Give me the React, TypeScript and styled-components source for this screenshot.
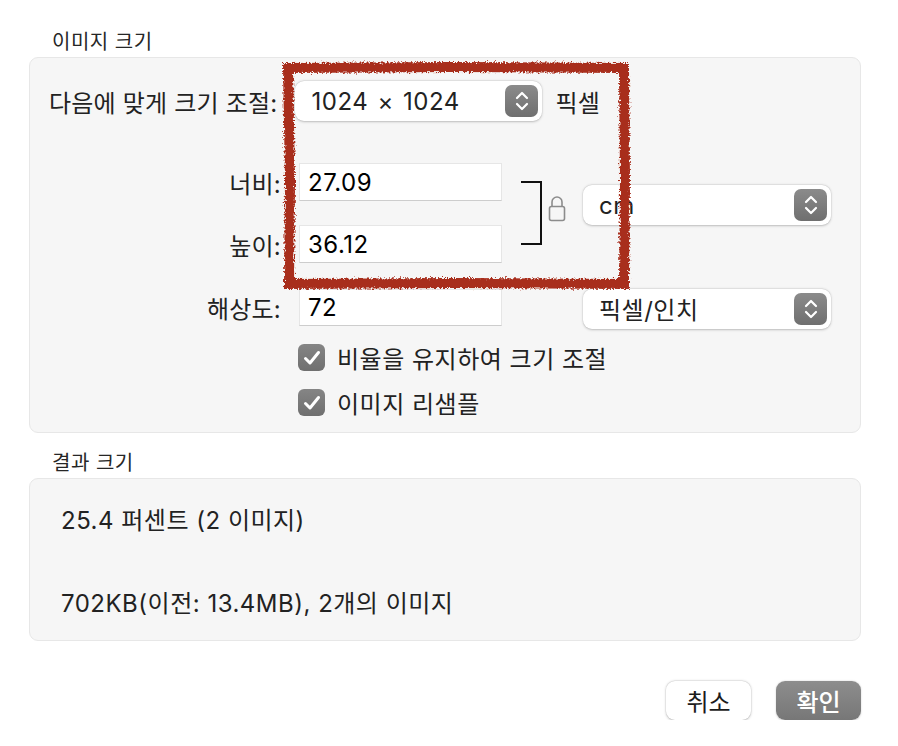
import styled, { createGlobalStyle } from "styled-components";

const GlobalStyle = createGlobalStyle`
  body {
    margin: 0;
    background: #ffffff;
    font-family: Inter, "Noto Sans CJK KR", sans-serif;
    color: #222222;
    letter-spacing: 0.5px;
  }
`;

function Stepper() {
  return (
    <StepperButton>
      <svg width="14" height="22" viewBox="0 0 14 22" fill="none">
        <path d="M2 8 L7 3 L12 8" stroke="#fff" strokeWidth="2.2" strokeLinecap="round" strokeLinejoin="round" />
        <path d="M2 14 L7 19 L12 14" stroke="#fff" strokeWidth="2.2" strokeLinecap="round" strokeLinejoin="round" />
      </svg>
    </StepperButton>
  );
}

function Popup({ value }: { value: string }) {
  return (
    <PopupBox>
      <span>{value}</span>
      <Stepper />
    </PopupBox>
  );
}

function Check({ label }: { label: string }) {
  return (
    <CheckRow>
      <CheckBox>
        <svg width="18" height="16" viewBox="0 0 18 16" fill="none">
          <path d="M2.5 8.5 L7 13 L15.5 2.5" stroke="#fff" strokeWidth="3" strokeLinecap="round" strokeLinejoin="round" />
        </svg>
      </CheckBox>
      <span>{label}</span>
    </CheckRow>
  );
}

function LockIcon() {
  return (
    <LockWrap>
      <svg width="18" height="27" viewBox="0 0 18 27" fill="none">
        <path d="M4 12 V7 a5 5 0 0 1 10 0 V12" stroke="#8c8c8c" strokeWidth="1.6" />
        <rect x="1.5" y="11.5" width="15" height="14" rx="2" stroke="#8c8c8c" strokeWidth="1.6" />
      </svg>
    </LockWrap>
  );
}

function Annotation() {
  return (
    <Overlay width="898" height="746" viewBox="0 0 898 746">
      <defs>
        <filter id="rough" x="-5%" y="-5%" width="110%" height="110%">
          <feTurbulence type="fractalNoise" baseFrequency="0.55" numOctaves="2" seed="3" />
          <feDisplacementMap in="SourceGraphic" scale="6" />
        </filter>
      </defs>
      <path
        d="M288 68 L450 67 L624 68 L625 180 L624 284 L450 283 L289 284 L290 180 Z"
        stroke="#a82d1c"
        strokeWidth="10"
        fill="none"
        strokeLinejoin="miter"
        filter="url(#rough)"
      />
    </Overlay>
  );
}

export default function App() {
  return (
    <>
      <GlobalStyle />
      <Page>
        <SectionTitle>이미지 크기</SectionTitle>
        <Panel $pad="23px 30px 16px 19px">
          <FitRow>
            <Label>다음에 맞게 크기 조절:</Label>
            <PopupSlot $width={247}>
              <Popup value="1024 × 1024" />
            </PopupSlot>
            <Label>픽셀</Label>
          </FitRow>
          <DimGrid>
            <GridLabel $row={1}>너비:</GridLabel>
            <Field $row={1}>27.09</Field>
            <GridLabel $row={3}>높이:</GridLabel>
            <Field $row={3}>36.12</Field>
            <LinkCell>
              <Bracket />
              <LockIcon />
            </LinkCell>
            <PopupCell $row="1 / 4" $shift={-8}>
              <Popup value="cm" />
            </PopupCell>
            <GridLabel $row={5}>해상도:</GridLabel>
            <Field $row={5}>72</Field>
            <PopupCell $row="5" $shift={1}>
              <Popup value="픽셀/인치" />
            </PopupCell>
          </DimGrid>
          <CheckList>
            <Check label="비율을 유지하여 크기 조절" />
            <Check label="이미지 리샘플" />
          </CheckList>
        </Panel>
        <SectionTitle $top={18}>결과 크기</SectionTitle>
        <Panel $pad="27px 30px 21px 31px">
          <ResultLine>25.4 퍼센트 (2 이미지)</ResultLine>
          <ResultLine $top={53}>702KB(이전: 13.4MB), 2개의 이미지</ResultLine>
        </Panel>
        <Actions>
          <Button>취소</Button>
          <Button $primary>확인</Button>
        </Actions>
        <Annotation />
      </Page>
    </>
  );
}

const Page = styled.div`
  position: relative;
  width: 832px;
  padding: 30px 0 0 29px;
  display: flex;
  flex-direction: column;
`;

const SectionTitle = styled.div<{ $top?: number }>`
  margin: ${({ $top }) => $top || 0}px 0 3px 23px;
  height: 24px;
  line-height: 24px;
  font-size: 20px;
  color: #262626;
`;

const Panel = styled.div<{ $pad: string }>`
  box-sizing: border-box;
  background: #f6f6f6;
  border: 1px solid #e7e7e7;
  border-radius: 9px;
  padding: ${({ $pad }) => $pad};
`;

const FitRow = styled.div`
  display: flex;
  align-items: center;
  height: 40px;

  & > :first-child {
    margin-right: 18px;
  }
  & > :last-child {
    margin-left: 13px;
  }
`;

const Label = styled.span`
  font-size: 24px;
  letter-spacing: 0.2px;
  color: #222;
  white-space: nowrap;
`;

const PopupSlot = styled.div<{ $width: number }>`
  width: ${({ $width }) => $width}px;
`;

const PopupBox = styled.div`
  box-sizing: border-box;
  height: 40px;
  display: flex;
  align-items: center;
  justify-content: space-between;
  padding: 0 4px 0 16px;
  background: #ffffff;
  border-radius: 9px;
  box-shadow: 0 0.5px 2.5px rgba(0, 0, 0, 0.22), 0 0 0 0.5px rgba(0, 0, 0, 0.06);
  font-size: 24px;
  word-spacing: 2px;
  color: #222;
`;

const StepperButton = styled.div`
  width: 33px;
  height: 32px;
  border-radius: 7px;
  background: linear-gradient(#8b8b8b, #6f6f6f);
  display: flex;
  align-items: center;
  justify-content: center;
`;

const DimGrid = styled.div`
  display: grid;
  grid-template-columns: 250px 203px 81px 248px;
  grid-template-rows: 38px 24px 38px 26px 37px;
  margin-top: 42px;
`;

const GridLabel = styled.span<{ $row: number }>`
  grid-column: 1;
  grid-row: ${({ $row }) => $row};
  align-self: center;
  justify-self: end;
  padding-right: 18px;
  font-size: 24px;
  letter-spacing: 0.2px;
  color: #222;
`;

const Field = styled.div<{ $row: number }>`
  grid-column: 2;
  grid-row: ${({ $row }) => $row};
  box-sizing: border-box;
  display: flex;
  align-items: center;
  padding-left: 8px;
  background: #ffffff;
  border: 1px solid #e6e6e6;
  border-bottom-color: #cdcdcd;
  font-size: 24px;
  color: #000;
`;

const LinkCell = styled.div`
  grid-column: 3;
  grid-row: 1 / 4;
  display: flex;
  align-items: center;
  padding-left: 19px;
  gap: 6px;
`;

const Bracket = styled.div`
  width: 19px;
  height: 60px;
  border: 2px solid #111;
  border-left: none;
`;

const LockWrap = styled.span`
  display: flex;
  margin-bottom: 10px;
`;

const PopupCell = styled.div<{ $row: string; $shift: number }>`
  grid-column: 4;
  grid-row: ${({ $row }) => $row};
  align-self: center;
  margin-top: ${({ $shift }) => $shift * 2}px;
`;

const CheckList = styled.div`
  display: flex;
  flex-direction: column;
  gap: 18px;
  margin: 18px 0 0 249px;
`;

const CheckRow = styled.label`
  display: flex;
  align-items: center;
  gap: 12px;
  height: 27px;
  font-size: 24px;
  color: #222;
`;

const CheckBox = styled.span`
  width: 27px;
  height: 27px;
  border-radius: 6px;
  background: linear-gradient(#858585, #6f6f6f);
  display: flex;
  align-items: center;
  justify-content: center;
`;

const ResultLine = styled.div<{ $top?: number }>`
  margin-top: ${({ $top }) => $top || 0}px;
  height: 30px;
  line-height: 30px;
  font-size: 24px;
  color: #222;
`;

const Actions = styled.div`
  display: flex;
  justify-content: flex-end;
  gap: 25px;
  margin-top: 40px;
`;

const Button = styled.button<{ $primary?: boolean }>`
  width: 85px;
  height: 39px;
  border: none;
  border-radius: 9px;
  font-family: inherit;
  font-size: 24px;
  font-weight: ${({ $primary }) => ($primary ? 500 : 400)};
  color: ${({ $primary }) => ($primary ? "#ffffff" : "#1c1c1c")};
  background: ${({ $primary }) => ($primary ? "linear-gradient(#8d8d8d, #777777)" : "#ffffff")};
  box-shadow: ${({ $primary }) =>
    $primary ? "0 0.5px 2px rgba(0,0,0,0.2)" : "0 0.5px 2.5px rgba(0,0,0,0.25), 0 0 0 0.5px rgba(0,0,0,0.06)"};
`;

const Overlay = styled.svg`
  position: absolute;
  left: 0;
  top: 0;
  pointer-events: none;
`;
